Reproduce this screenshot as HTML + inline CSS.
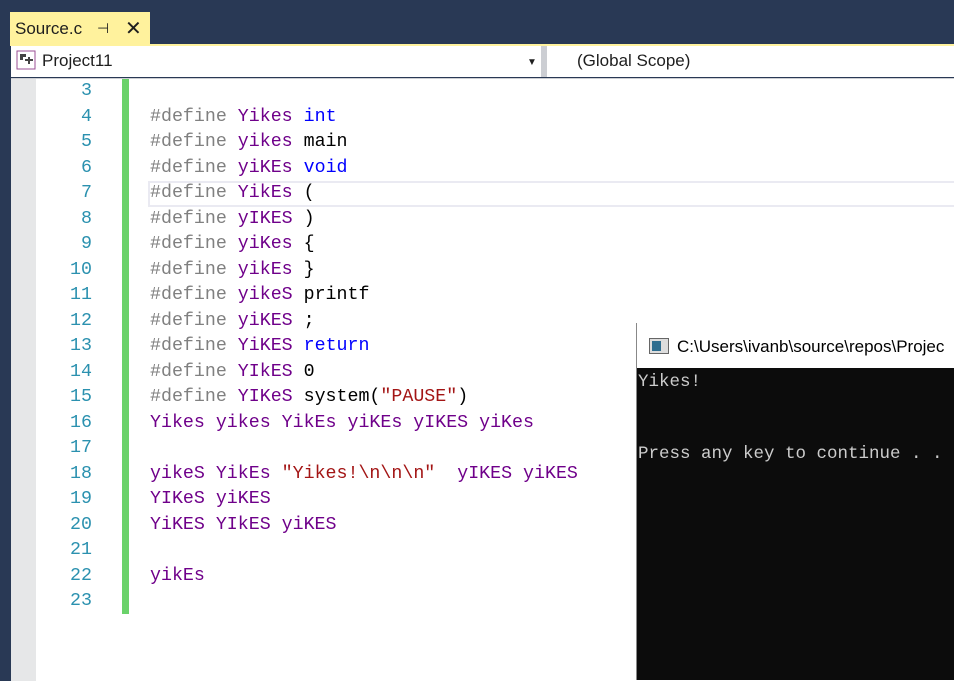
<!DOCTYPE html>
<html><head><style>
body{margin:0;width:954px;height:680px;overflow:hidden;background:#293955;position:relative;font-family:"Liberation Sans",sans-serif}
.tab{position:absolute;left:10px;top:12px;width:140px;height:33px;background:#fff29d}
.tab span{position:absolute;top:7px;font-size:17px;color:#1e1e1e}
.bar{position:absolute;left:10px;top:44px;width:944px;height:2px;background:#fff29d}
.dd{position:absolute;top:46px;height:31px;background:#fff;font-size:17px;color:#1e1e1e}
.ed{position:absolute;left:11px;top:78px;width:943px;height:602px;background:#fff;border-top:1px solid #ccced3}
.gut{position:absolute;left:0;top:0;width:25px;height:602px;background:#e6e7e8}
.green{position:absolute;left:111px;top:0;width:7px;height:535px;background:#6ad26a}
.cur{position:absolute;left:137px;top:102px;width:810px;height:22px;border:2px solid #eaeaf2;border-right:none}
pre{position:absolute;margin:0;top:0;font-family:"Liberation Mono",monospace;font-size:18.3px;line-height:25.5px}
.ln{left:31px;width:50px;text-align:right;color:#2b91af}
.code{left:139px;color:#000}
.d{color:#808080}.m{color:#6f008a}.k{color:#0000ff}.s{color:#a31515}
.con{position:absolute;left:636px;top:323px;width:318px;height:357px;background:#0c0c0c;border-left:1px solid #888}
.ct{height:45px;background:#fff;font-size:17px;color:#000;position:relative}
.con pre{position:absolute;left:1px;top:41px;color:#ccc;font-size:17.5px;line-height:36px}
</style></head><body>
<div class="tab"><span style="left:5px">Source.c</span><span style="left:87px;font-size:14px;top:8px">⊣</span><span style="left:115px;top:4px;font-size:20px">✕</span></div>
<div class="bar"></div>
<div class="dd" style="left:11px;width:530px"><svg style="position:absolute;left:5px;top:4px" width="20" height="20"><rect x="1" y="1" width="18" height="18" fill="#fff" stroke="#9b4f96"/><path d="M4 4h6v3H7v3H4z" fill="#444"/><path d="M9 9h3V7h2v2h3v2h-3v3h-2v-3H9z" fill="#444"/></svg><span style="position:absolute;left:31px;top:5px">Project11</span><span style="position:absolute;left:516px;top:11px;font-size:10px">▼</span></div>
<div class="dd" style="left:541px;width:6px;background:#ccced3"></div>
<div class="dd" style="left:547px;width:407px"><span style="position:absolute;left:30px;top:5px">(Global Scope)</span></div>
<div class="ed">
<div class="gut"></div><div class="green"></div><div class="cur"></div>
<pre class="ln">3
4
5
6
7
8
9
10
11
12
13
14
15
16
17
18
19
20
21
22
23</pre>
<pre class="code">&#8203;
<span class="d">#define</span> <span class="m">Yikes</span> <span class="k">int</span>
<span class="d">#define</span> <span class="m">yikes</span> main
<span class="d">#define</span> <span class="m">yiKEs</span> <span class="k">void</span>
<span class="d">#define</span> <span class="m">YikEs</span> (
<span class="d">#define</span> <span class="m">yIKES</span> )
<span class="d">#define</span> <span class="m">yiKes</span> {
<span class="d">#define</span> <span class="m">yikEs</span> }
<span class="d">#define</span> <span class="m">yikeS</span> printf
<span class="d">#define</span> <span class="m">yiKES</span> ;
<span class="d">#define</span> <span class="m">YiKES</span> <span class="k">return</span>
<span class="d">#define</span> <span class="m">YIkES</span> 0
<span class="d">#define</span> <span class="m">YIKeS</span> system(<span class="s">"PAUSE"</span>)
<span class="m">Yikes yikes YikEs yiKEs yIKES yiKes</span>

<span class="m">yikeS YikEs</span> <span class="s">"Yikes!\n\n\n"</span>  <span class="m">yIKES yiKES</span>
<span class="m">YIKeS yiKES</span>
<span class="m">YiKES YIkES yiKES</span>

<span class="m">yikEs</span>
</pre>
</div>
<div class="con"><div class="ct"><svg style="position:absolute;left:12px;top:15px" width="20" height="16"><rect x="0.5" y="0.5" width="19" height="15" fill="#ddd" stroke="#666"/><rect x="3" y="3" width="9" height="10" fill="#2d6d8f"/></svg><span style="position:absolute;left:40px;top:14px;white-space:nowrap">C:\Users\ivanb\source\repos\Projec</span></div>
<pre>Yikes!

Press any key to continue . . .</pre></div>
</body></html>
